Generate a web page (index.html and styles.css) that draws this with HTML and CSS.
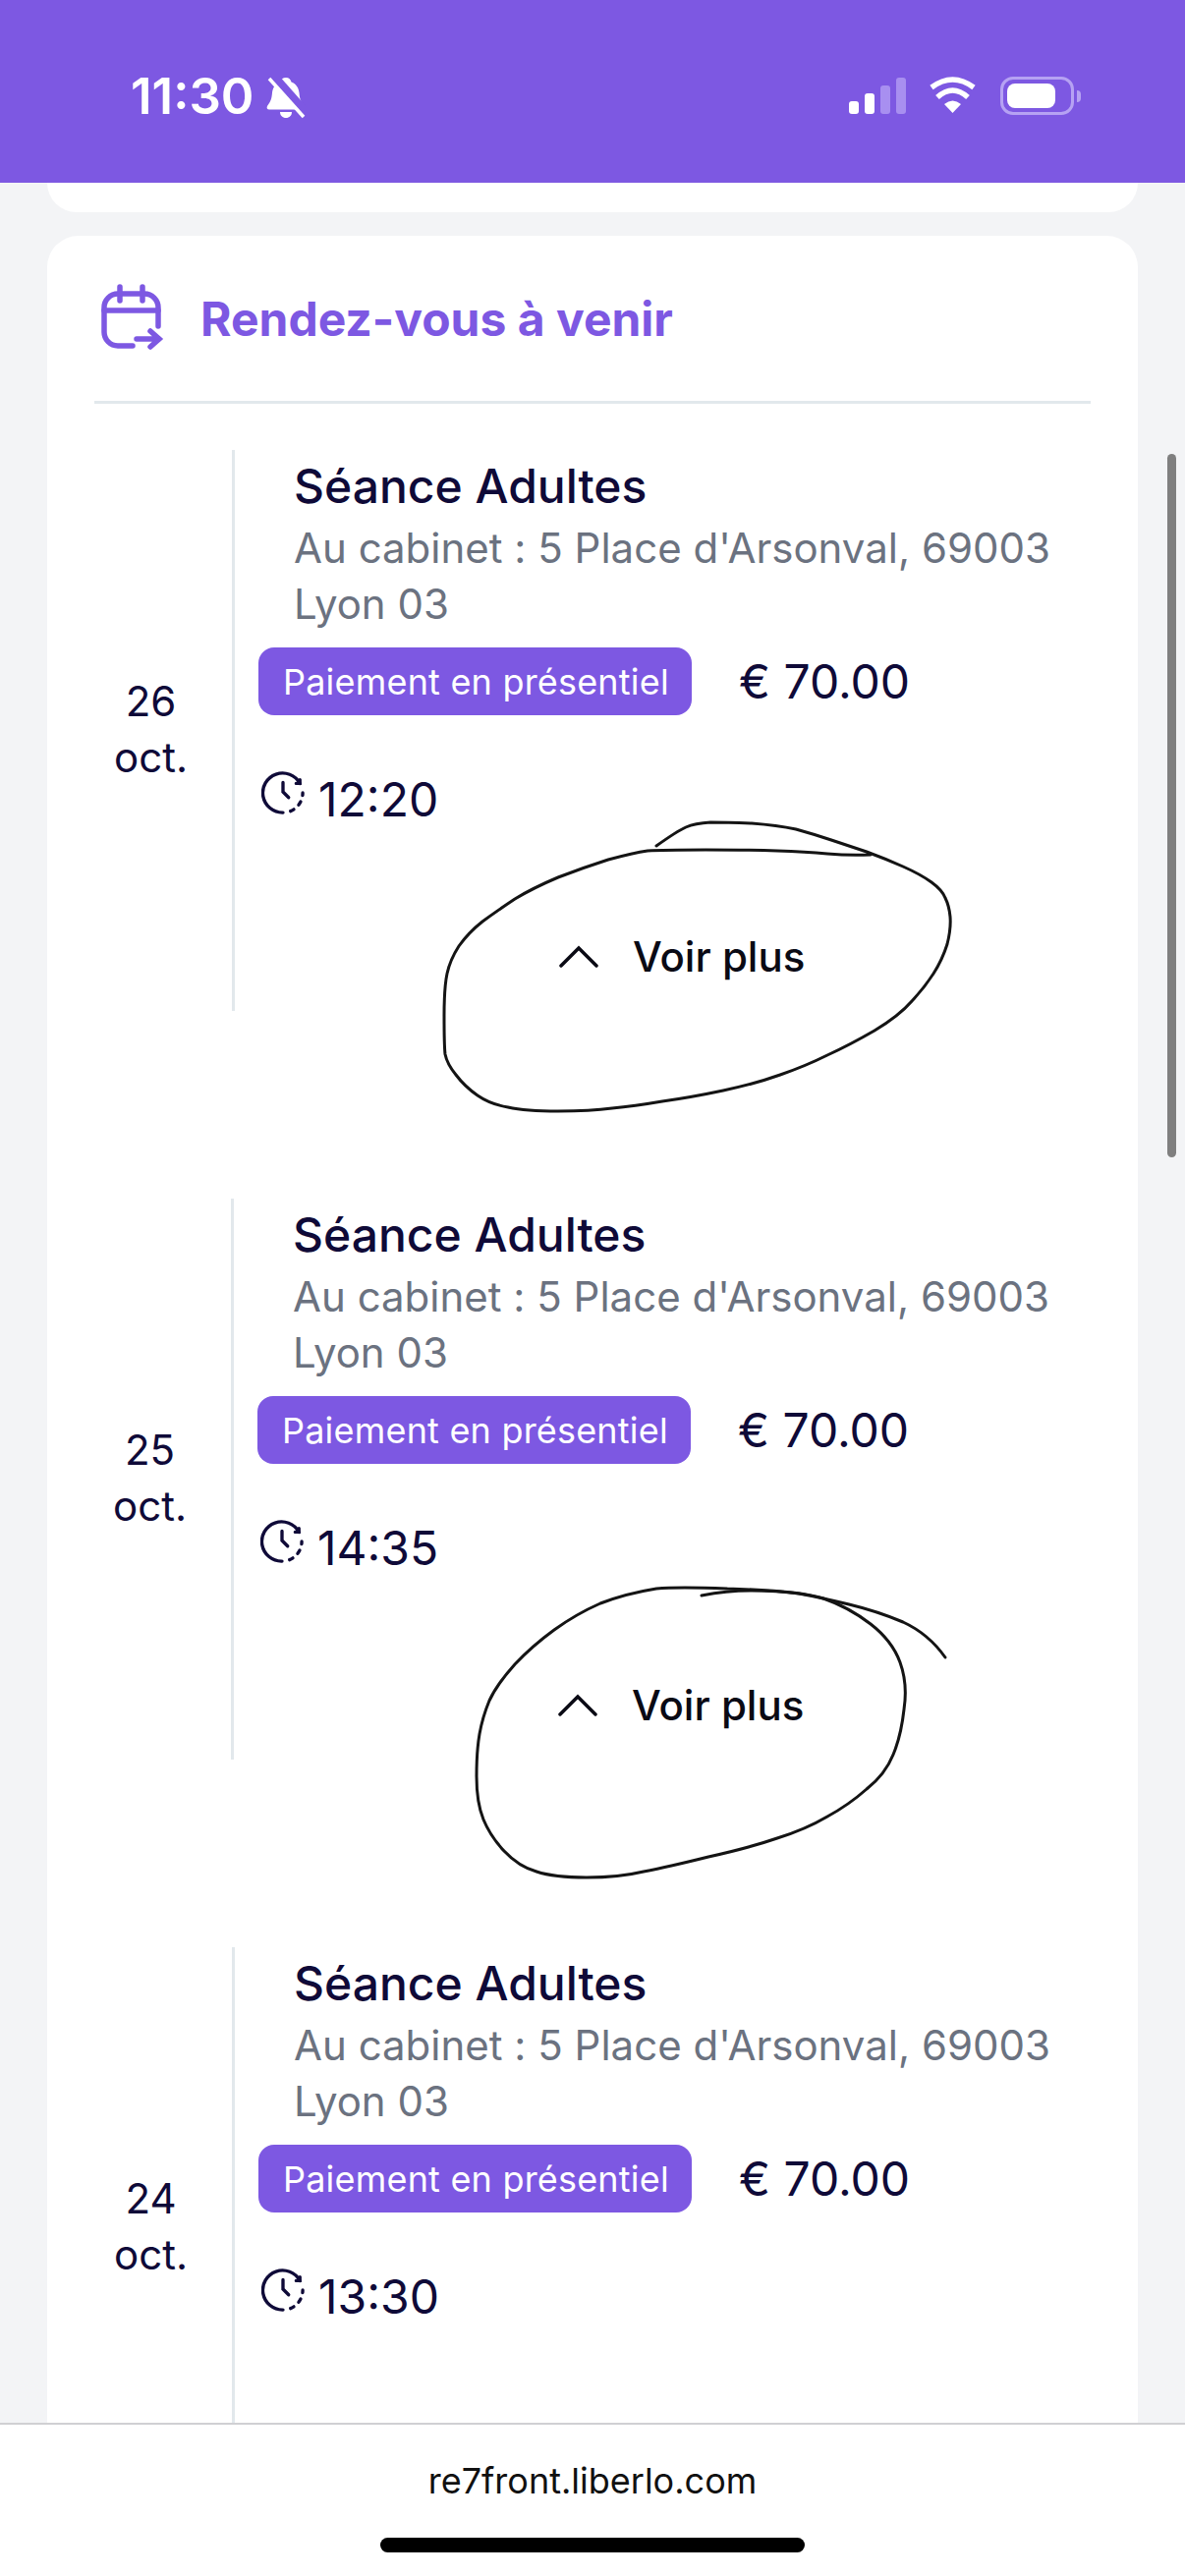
FILE: index.html
```html
<!DOCTYPE html>
<html lang="fr">
<head>
    <meta charset="UTF-8">
    <meta name="viewport" content="width=device-width, initial-scale=1.0">
    <title>Rendez-vous à venir</title>
    <link rel="stylesheet" href="styles.css">
</head>
<body>

<div class="status-bar">
    <div class="status-left">
        <span class="status-time">11:30</span>
        <svg class="bell" viewBox="0 0 42 44">
            <path class="bell-body" d="M21 2c3 0 5 2 5.500 4.500 5 2 7.500 6 8 11 .5 6 1.500 9 5 13.500 1 2 0 3.500-2 3.500H4c-2 0-3-1.500-2-3.500 3.500-4.500 4.500-7.500 5-13.500.5-5 3-9 8-11C15.500 4 18 2 21 2z"/>
            <path class="bell-body" d="M15 37h12c0 3.500-2.500 6-6 6s-6-2.500-6-6z"/>
            <path class="bell-gap" d="M3 0l37 42"/>
            <path class="bell-slash" d="M4 3l35 39"/>
        </svg>
    </div>
    <div class="status-right">
        <div class="signal">
            <span class="bar bar-1"></span>
            <span class="bar bar-2"></span>
            <span class="bar bar-3 off"></span>
            <span class="bar bar-4 off"></span>
        </div>
        <svg class="wifi" viewBox="0 0 50 38">
            <path class="wifi-arc" d="M3 11Q24.500-5 46 11"/>
            <path class="wifi-arc" d="M9 21Q24.500 7 40 21"/>
            <path class="wifi-dot" d="M24.500 37L16 28Q24.500 21 33 28z"/>
        </svg>
        <div class="battery">
            <div class="battery-body"><div class="battery-fill"></div></div>
            <span class="battery-nub"></span>
        </div>
    </div>
</div>

<div class="content">
    <div class="card-end"></div>

    <div class="card">
        <div class="card-header">
            <svg class="calendar-icon" viewBox="100 290 66 70">
                <path d="M159 333V314a14 14 0 0 0-14-14H118a14 14 0 0 0-14 14v25a14 14 0 0 0 14 14h15"/>
                <path d="M120 293v14M143 293v14M104 317h55M137 346h23M151 338l9 8-9 8"/>
            </svg>
            <h2>Rendez-vous à venir</h2>
        </div>

        <div class="row">
            <div class="date">26<br>oct.</div>
            <div class="details">
                <div class="title">Séance Adultes</div>
                <div class="address">Au cabinet : 5 Place d'Arsonval, 69003 Lyon 03</div>
                <div class="pay-line">
                    <span class="badge">Paiement en présentiel</span>
                    <span class="price">€ 70.00</span>
                </div>
                <div class="time-line">
                    <svg class="clock" viewBox="0 0 46 46">
                        <path d="M41 13A21 21 0 1 0 23 44"/>
                        <path class="clock-dash" d="M31 42.500A21 21 0 0 0 44 23"/>
                        <path d="M41 9v4h-4M23 12v10l6 6"/>
                    </svg>
                    <span>12:20</span>
                </div>
                <div class="more">
                    <svg class="chevron" viewBox="0 0 40 24"><path d="M2 21L20 3l18 18"/></svg>
                    <span>Voir plus</span>
                </div>
            </div>
            <svg class="ink ink-one" viewBox="450 835 520 300">
                <path d="M668 861Q689 846 698 842Q707 838 723 837Q740 837 765 838Q791 840 810 844Q828 849 846 855Q864 861 882 867Q901 874 919 882Q937 890 948 898Q959 906 962 914Q966 922 967 933Q968 945 964 961Q959 977 950 991Q941 1005 928 1019Q915 1034 890 1049Q864 1064 842 1074Q820 1085 794 1094Q769 1103 736 1110Q703 1117 674 1121Q645 1126 623 1128Q601 1131 568 1131Q535 1131 517 1127Q499 1124 486 1115Q473 1106 464 1094Q455 1083 453 1073Q452 1064 452 1034Q452 1005 455 991Q458 977 467 963Q477 949 491 938Q506 927 524 915Q542 904 568 893Q594 883 619 875Q645 868 659 866Q674 865 718 865Q762 865 791 866Q820 867 842 869Q864 871 886 870"/>
            </svg>
        </div>

        <div class="row row-shift">
            <div class="date">25<br>oct.</div>
            <div class="details">
                <div class="title">Séance Adultes</div>
                <div class="address">Au cabinet : 5 Place d'Arsonval, 69003 Lyon 03</div>
                <div class="pay-line">
                    <span class="badge">Paiement en présentiel</span>
                    <span class="price">€ 70.00</span>
                </div>
                <div class="time-line">
                    <svg class="clock" viewBox="0 0 46 46">
                        <path d="M41 13A21 21 0 1 0 23 44"/>
                        <path class="clock-dash" d="M31 42.500A21 21 0 0 0 44 23"/>
                        <path d="M41 9v4h-4M23 12v10l6 6"/>
                    </svg>
                    <span>14:35</span>
                </div>
                <div class="more">
                    <svg class="chevron" viewBox="0 0 40 24"><path d="M2 21L20 3l18 18"/></svg>
                    <span>Voir plus</span>
                </div>
            </div>
            <svg class="ink ink-two" viewBox="482 1612 484 304">
                <path d="M714 1624Q740 1619 765 1619Q791 1619 813 1622Q835 1626 864 1633Q893 1640 919 1651Q945 1663 962 1687"/>
                <path d="M740 1617Q690 1615 668 1617Q637 1622 611 1632Q586 1643 564 1659Q542 1675 524 1694Q506 1714 498 1731Q491 1748 488 1765Q485 1782 485 1808Q485 1835 492 1852Q499 1869 513 1884Q528 1900 546 1905Q564 1911 597 1911Q630 1911 655 1905Q681 1900 721 1890Q762 1881 791 1871Q820 1862 842 1849Q864 1837 882 1821Q901 1806 909 1786Q917 1767 920 1740Q924 1714 916 1692Q908 1670 886 1653Q864 1636 838 1627Q813 1619 740 1617"/>
            </svg>
        </div>

        <div class="row">
            <div class="date">24<br>oct.</div>
            <div class="details">
                <div class="title">Séance Adultes</div>
                <div class="address">Au cabinet : 5 Place d'Arsonval, 69003 Lyon 03</div>
                <div class="pay-line">
                    <span class="badge">Paiement en présentiel</span>
                    <span class="price">€ 70.00</span>
                </div>
                <div class="time-line">
                    <svg class="clock" viewBox="0 0 46 46">
                        <path d="M41 13A21 21 0 1 0 23 44"/>
                        <path class="clock-dash" d="M31 42.500A21 21 0 0 0 44 23"/>
                        <path d="M41 9v4h-4M23 12v10l6 6"/>
                    </svg>
                    <span>13:30</span>
                </div>
            </div>
        </div>
    </div>

    <div class="scroll-thumb"></div>
</div>

<div class="url-bar">
    <span class="url">re7front.liberlo.com</span>
    <div class="home-indicator"></div>
</div>

</body>
</html>
```

FILE: styles.css
```css
* {
    box-sizing: border-box;
}
html, body {
    margin: 0;
    height: 2622px;
    overflow: hidden;
}
body {
    display: flex;
    flex-direction: column;
    font-family: Inter, "Liberation Sans", sans-serif;
    background-color: #f3f4f6;
    color: #0f0a38;
}

/* status bar */
.status-bar {
    height: 186px;
    flex: none;
    display: flex;
    justify-content: space-between;
    padding: 77px 106px 0 133px;
    background-color: #7d58e2;
    color: white;
}
.status-left {
    display: flex;
    align-items: flex-start;
    gap: 12px;
}
.status-time {
    font-size: 51px;
    font-weight: 600;
    line-height: 42px;
}
.bell {
    width: 42px;
    height: 44px;
}
.bell-body {
    fill: white;
}
.bell-gap {
    stroke: #7d58e2;
    stroke-width: 8;
    transform: translate(3px, -3px);
}
.bell-slash {
    stroke: white;
    stroke-width: 3.500;
}
.status-right {
    display: flex;
    align-items: flex-start;
    gap: 23px;
}
.signal {
    display: flex;
    align-items: flex-end;
    gap: 6px;
    height: 37px;
    margin-top: 2px;
}
.bar {
    width: 10px;
    background-color: white;
    border-radius: 3px;
}
.bar.off {
    background-color: #a88ff0;
}
.bar-1 { height: 13px; }
.bar-2 { height: 21px; }
.bar-3 { height: 29px; }
.bar-4 { height: 37px; }
.wifi {
    width: 50px;
    height: 38px;
    margin-top: 1px;
}
.wifi-arc {
    fill: none;
    stroke: white;
    stroke-width: 5.500;
}
.wifi-dot {
    fill: white;
}
.battery {
    display: flex;
    align-items: center;
    gap: 3px;
    margin-top: 1px;
}
.battery-body {
    width: 75px;
    height: 39px;
    padding: 4px;
    border: 3px solid #b6a2f3;
    border-radius: 13px;
}
.battery-fill {
    width: 49px;
    height: 100%;
    background-color: white;
    border-radius: 8px;
}
.battery-nub {
    width: 4px;
    height: 12px;
    background-color: #b6a2f3;
    border-radius: 0 4px 4px 0;
}

/* page content */
.content {
    position: relative;
    flex: 1;
    min-height: 0;
    overflow: hidden;
}
.card-end {
    height: 30px;
    margin: 0 48px 24px;
    background: white;
    border-radius: 0 0 32px 32px;
}
.card {
    margin: 0 48px;
    padding: 0 48px;
    background: white;
    border-radius: 32px 32px 0 0;
}
.card-header {
    height: 171px;
    display: flex;
    align-items: center;
    gap: 36px;
    padding: 0 0 0 6px;
    border-bottom: 3px solid #e2e8ec;
    margin-bottom: 47px;
}
.card-header h2 {
    margin: 0;
    font-size: 48px;
    font-weight: 700;
    color: #7d58e2;
}
.calendar-icon {
    width: 66px;
    height: 70px;
    fill: none;
    stroke: #7d58e2;
    stroke-width: 5.500;
    stroke-linecap: round;
}

/* appointment rows */
.row {
    position: relative;
    display: flex;
    align-items: center;
    height: 571px;
    margin-bottom: 191px;
}
.row-shift {
    margin-left: -1px;
}
.date {
    width: 115px;
    margin-right: 25px;
    padding-bottom: 4px;
    font-size: 42px;
    line-height: 57px;
    text-align: center;
}
.details {
    align-self: stretch;
    flex: 1;
    padding: 6px 0 0 24px;
    border-left: 3px solid #e2e8ec;
}
.title {
    padding-left: 36px;
    font-size: 48px;
    font-weight: 500;
    line-height: 62px;
}
.address {
    padding: 0 36px;
    margin-top: 3px;
    font-size: 42px;
    font-feature-settings: "calt" 0;
    line-height: 57px;
    color: #6b7280;
}
.pay-line {
    display: flex;
    align-items: center;
    gap: 48px;
    margin-top: 16px;
}
.badge {
    width: 441px;
    height: 69px;
    display: flex;
    align-items: center;
    padding: 0 0 0 25px;
    font-size: 36px;
    letter-spacing: 0.2px;
    color: white;
    background-color: #7d58e2;
    border-radius: 16px;
}
.price {
    font-size: 48px;
}
.time-line {
    display: flex;
    align-items: flex-start;
    gap: 14px;
    margin-top: 57px;
    font-size: 48px;
    line-height: 58px;
}
.clock {
    width: 44px;
    height: 44px;
    margin: 0 0 0 3px;
    fill: none;
    stroke: #0f0a38;
    stroke-width: 3.500;
    stroke-linecap: round;
}
.clock-dash {
    stroke-dasharray: 4 7;
}
.more {
    display: flex;
    align-items: center;
    gap: 35px;
    margin: 102px 0 0 306px;
    font-size: 42px;
    font-weight: 500;
    line-height: 58px;
    color: #0a0a14;
}
.chevron {
    width: 40px;
    height: 24px;
    fill: none;
    stroke: #0a0a14;
    stroke-width: 3.500;
    stroke-linecap: round;
}

/* hand drawn circles over the page */
.ink {
    position: absolute;
    fill: none;
    stroke: #141414;
    stroke-width: 3;
    stroke-linecap: round;
}
.ink-one {
    left: 354px;
    top: 377px;
    width: 520px;
    height: 300px;
}
.ink-two {
    left: 387px;
    top: 392px;
    width: 484px;
    height: 304px;
}

.scroll-thumb {
    position: absolute;
    top: 276px;
    right: 9px;
    width: 9px;
    height: 716px;
    background-color: #7f7f7f;
    border-radius: 5px;
}

/* browser url bar */
.url-bar {
    position: relative;
    height: 156px;
    flex: none;
    display: flex;
    flex-direction: column;
    align-items: center;
    padding-top: 34px;
    background: white;
    border-top: 2px solid #d0d0d3;
}
.url {
    font-size: 36px;
    line-height: 46px;
    color: #111;
}
.home-indicator {
    width: 432px;
    height: 15px;
    margin-top: 35px;
    background: black;
    border-radius: 8px;
}
```
